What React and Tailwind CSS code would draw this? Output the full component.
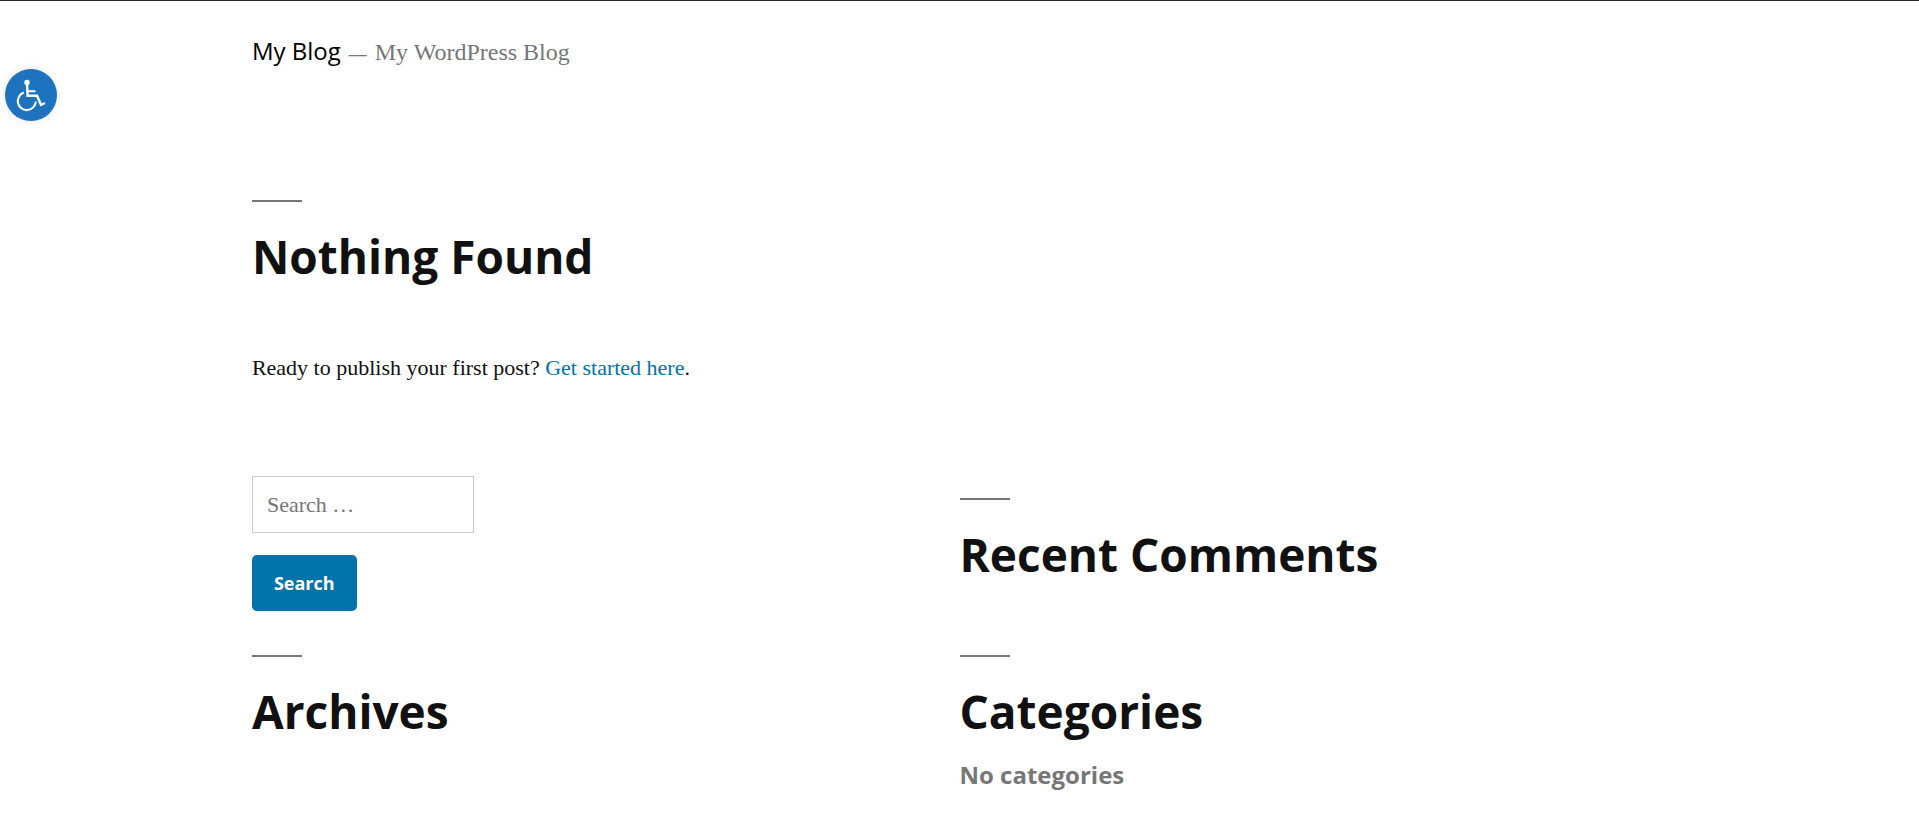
const sans = "font-['Open_Sans','Noto_Sans',sans-serif]";

function Heading({ as: Tag = "h2", children }) {
  return (
    <div>
      <div className="h-0.5 w-[50px] bg-[#767676]" />
      <Tag className={`mt-6 text-[46px] font-bold leading-[60px] text-[#111] ${sans}`}>
        {children}
      </Tag>
    </div>
  );
}

function AccessibilityIcon() {
  return (
    <svg viewBox="0 0 52 52" className="size-[52px]" fill="none" stroke="#fff" aria-hidden="true">
      <circle cx="22" cy="13.5" r="2.7" fill="#fff" stroke="none" />
      <path d="M22 14.5 L22.6 26.8 H32 L36 35.8 L40 34" strokeWidth="2.4" />
      <path d="M22.5 22.2 H30.5" strokeWidth="2" />
      <path d="M18.8 23.6 A9 9 0 1 0 30.8 32.6" strokeWidth="2.1" />
    </svg>
  );
}

export default function App() {
  return (
    <div className="border-t border-[#23282d] bg-white font-['Liberation_Serif',serif] text-[22px] text-[#111]">
      <button
        type="button"
        aria-label="Accessibility tools"
        className="absolute left-[5px] top-[69px] size-[52px] rounded-full bg-[#1e73be] shadow-[0_0_10px_rgba(0,0,0,0.1)]"
      >
        <AccessibilityIcon />
      </button>

      <div className="mx-[calc(10%+60px)]">
        <header className="flex items-baseline pt-[30px] leading-10">
          <a href="#" className={`text-[24px] text-black ${sans}`}>My Blog</a>
          <span className="ml-2 text-[18px] font-bold text-[#767676]">—</span>
          <p className="ml-2 text-[24px] text-[#767676]">My WordPress Blog</p>
        </header>

        <main className="pt-[126px]">
          <Heading as="h1">Nothing Found</Heading>
          <p className="mt-16 leading-9">
            Ready to publish your first post?{" "}
            <a href="#" className="text-[#0073aa]">Get started here</a>.
          </p>
        </main>

        <aside className="grid grid-cols-2 pb-6 pt-[90px]">
          <form className="flex flex-col items-start gap-[22px] pb-11" onSubmit={(e) => e.preventDefault()}>
            <input
              type="search"
              aria-label="Search"
              placeholder="Search …"
              className="h-[57px] w-[222px] border border-[#ccc] px-3.5 outline-none placeholder:text-[#767676]"
            />
            <button
              type="submit"
              className={`h-14 rounded-[5px] bg-[#0073aa] px-[22px] text-[18px] font-bold text-white ${sans}`}
            >
              Search
            </button>
          </form>
          <section className="pt-[22px]">
            <Heading>Recent Comments</Heading>
          </section>
          <section>
            <Heading>Archives</Heading>
          </section>
          <section>
            <Heading>Categories</Heading>
            <p className={`mt-4 text-[24px] font-bold leading-9 text-[#767676] ${sans}`}>No categories</p>
          </section>
        </aside>
      </div>
    </div>
  );
}
